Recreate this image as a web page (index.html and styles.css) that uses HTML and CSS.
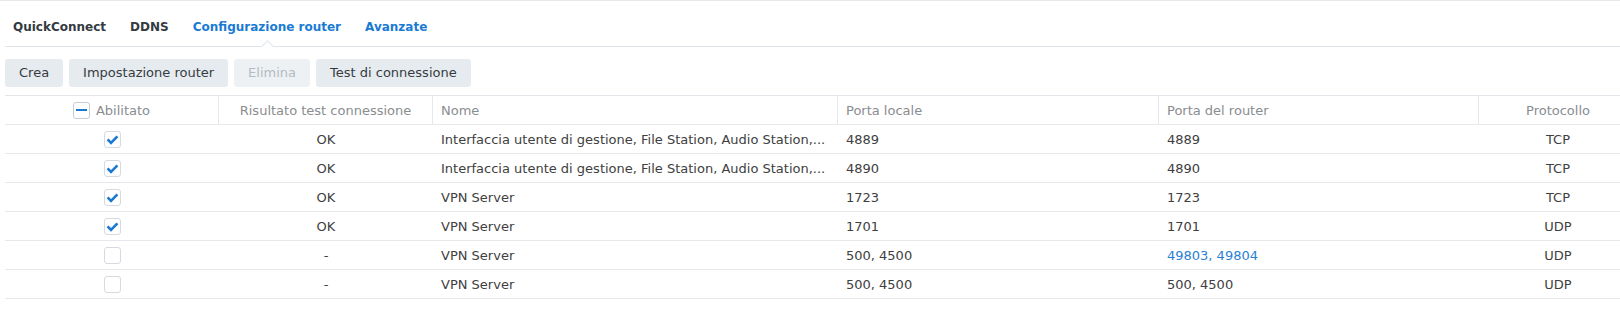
FILE: index.html
```html
<!DOCTYPE html>
<html lang="it">
<head>
<meta charset="utf-8">
<title>Configurazione router</title>
<link rel="stylesheet" href="styles.css">
</head>
<body>
<div class="topline"></div>
<div class="page">
  <nav class="tabs">
    <span class="tab">QuickConnect</span>
    <span class="tab">DDNS</span>
    <span class="tab tab-active">Configurazione router</span>
    <span class="tab tab-blue">Avanzate</span>
  </nav>
  <div class="toolbar">
    <button class="btn">Crea</button>
    <button class="btn">Impostazione router</button>
    <button class="btn btn-disabled">Elimina</button>
    <button class="btn">Test di connessione</button>
  </div>
  <div class="grid">
    <div class="row head">
      <div class="cell center sep"><span class="cb cb-head"><span class="minus"></span></span><span class="head-label">Abilitato</span></div>
      <div class="cell center sep">Risultato test connessione</div>
      <div class="cell sep">Nome</div>
      <div class="cell sep">Porta locale</div>
      <div class="cell sep">Porta del router</div>
      <div class="cell center last">Protocollo</div>
    </div>
    <div class="row">
      <div class="cell center"><span class="cb"><svg viewBox="0 0 17 17" class="check"><polyline points="3.6,8.4 7,11.8 13.4,5.4"/></svg></span></div>
      <div class="cell center">OK</div>
      <div class="cell">Interfaccia utente di gestione, File Station, Audio Station,...</div>
      <div class="cell">4889</div>
      <div class="cell">4889</div>
      <div class="cell center last">TCP</div>
    </div>
    <div class="row">
      <div class="cell center"><span class="cb"><svg viewBox="0 0 17 17" class="check"><polyline points="3.6,8.4 7,11.8 13.4,5.4"/></svg></span></div>
      <div class="cell center">OK</div>
      <div class="cell">Interfaccia utente di gestione, File Station, Audio Station,...</div>
      <div class="cell">4890</div>
      <div class="cell">4890</div>
      <div class="cell center last">TCP</div>
    </div>
    <div class="row">
      <div class="cell center"><span class="cb"><svg viewBox="0 0 17 17" class="check"><polyline points="3.6,8.4 7,11.8 13.4,5.4"/></svg></span></div>
      <div class="cell center">OK</div>
      <div class="cell">VPN Server</div>
      <div class="cell">1723</div>
      <div class="cell">1723</div>
      <div class="cell center last">TCP</div>
    </div>
    <div class="row">
      <div class="cell center"><span class="cb"><svg viewBox="0 0 17 17" class="check"><polyline points="3.6,8.4 7,11.8 13.4,5.4"/></svg></span></div>
      <div class="cell center">OK</div>
      <div class="cell">VPN Server</div>
      <div class="cell">1701</div>
      <div class="cell">1701</div>
      <div class="cell center last">UDP</div>
    </div>
    <div class="row">
      <div class="cell center"><span class="cb"></span></div>
      <div class="cell center">-</div>
      <div class="cell">VPN Server</div>
      <div class="cell">500, 4500</div>
      <div class="cell link">49803, 49804</div>
      <div class="cell center last">UDP</div>
    </div>
    <div class="row">
      <div class="cell center"><span class="cb"></span></div>
      <div class="cell center">-</div>
      <div class="cell">VPN Server</div>
      <div class="cell">500, 4500</div>
      <div class="cell">500, 4500</div>
      <div class="cell center last">UDP</div>
    </div>
  </div>
</div>
</body>
</html>
```

FILE: styles.css
```css
* { box-sizing: border-box; }
html, body {
  margin: 0;
  padding: 0;
  background: #ffffff;
  font-family: "DejaVu Sans", Verdana, sans-serif;
  font-size: 13px;
  color: #404040;
  overflow: hidden;
}
.topline {
  height: 1px;
  background: #e6e8ea;
}
.page {
  padding-left: 5px;
}
.tabs {
  display: flex;
  gap: 24px;
  padding: 0 0 0 8px;
  height: 46px;
  border-bottom: 1px solid #dfe4e9;
}
.tab {
  position: relative;
  font-size: 12px;
  font-weight: bold;
  line-height: 16px;
  padding-top: 18px;
  color: #333a42;
}
.tab-active,
.tab-blue {
  color: #1a7bd3;
}
.tab-active::after {
  content: "";
  position: absolute;
  left: 50%;
  bottom: -5px;
  width: 8px;
  height: 8px;
  margin-left: -4px;
  background: #ffffff;
  border-top: 1px solid #dfe4e9;
  border-left: 1px solid #dfe4e9;
  transform: rotate(45deg);
}
.toolbar {
  display: flex;
  gap: 6px;
  margin-top: 12px;
  height: 28px;
}
.btn {
  font-family: "DejaVu Sans", Verdana, sans-serif;
  font-size: 13px;
  color: #363c42;
  background: #e6ebf0;
  border: none;
  border-radius: 3px;
  height: 28px;
  padding: 0 14px;
  line-height: 28px;
}
.btn-disabled {
  color: #b3bac1;
  background: #eef1f4;
}
.grid {
  margin-top: 8px;
  border-top: 1px solid #e2e6ea;
}
.row {
  display: grid;
  grid-template-columns: 214px 214px 405px 321px 320px 1fr;
  height: 29px;
  border-bottom: 1px solid #e6e8eb;
}
.row.head {
  color: #8a8d90;
}
.cell {
  display: flex;
  align-items: center;
  padding: 1px 8px 0 8px;
  white-space: nowrap;
  overflow: hidden;
}
.cell.center {
  justify-content: center;
}
.cell.sep {
  border-right: 1px solid #e6e8eb;
}
.cell.last {
  padding-left: 17px;
  padding-right: 0;
}
.head .cell {
  padding-top: 0;
}
.link {
  color: #2a7fd4;
}
.cb {
  display: inline-flex;
  align-items: center;
  justify-content: center;
  width: 17px;
  height: 17px;
  border: 1px solid #d4dae0;
  border-radius: 3px;
  background: #ffffff;
}
.cb-head {
  border-color: #c3ccd6;
  margin: 0 6px 0 0;
}
.minus {
  display: block;
  width: 11px;
  height: 2px;
  background: #1b78d0;
}
.head-label {
  padding-top: 1px;
}
.check {
  width: 17px;
  height: 17px;
  flex: none;
  margin: -1px;
}
.check polyline {
  fill: none;
  stroke: #1b78d0;
  stroke-width: 2.6;
  stroke-linecap: butt;
  stroke-linejoin: miter;
}
```
